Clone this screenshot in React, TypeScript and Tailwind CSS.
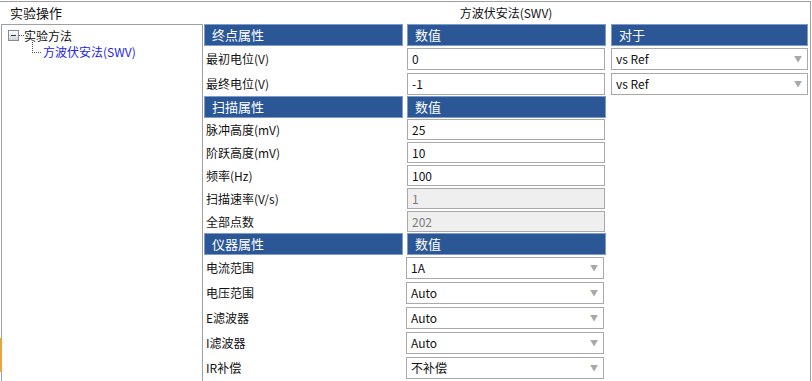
import React from 'react';

const font = { fontFamily: '"Noto Sans CJK SC", "Noto Sans", sans-serif' };

const Header = ({ left, right }: { left: string; right: string }) => (
  <div className="flex h-[22px]">
    <div className="w-[199px] bg-[#2b5797] border border-[#7f9bc9] text-white text-[13px] leading-[20px] pl-[7px]">{left}</div>
    <div className="w-[199px] ml-[4px] bg-[#2b5797] border border-[#7f9bc9] text-white text-[13px] leading-[20px] pl-[7px]">{right}</div>
  </div>
);

const Arrow = () => (
  <span className="text-[#a8a8a8] text-[8px] leading-none mr-[5px]">▼</span>
);

const InputRow = ({ label, value, disabled = false, tall = true }: { label: string; value: string; disabled?: boolean; tall?: boolean }) => (
  <div className={`flex items-start ${tall ? 'h-[25px] pt-[2px]' : 'h-[23px] pt-[1px]'}`}>
    <div className={`w-[203px] pl-[2px] text-[12px] text-[#111] ${tall ? 'leading-[22px]' : 'leading-[21px]'}`}>{label}</div>
    <div
      className={`w-[198px] border border-[#a9a9a9] pl-[4px] text-[12px] ${tall ? 'h-[22px] leading-[20px]' : 'h-[21px] leading-[19px]'} ${disabled ? 'bg-[#efefef] text-[#7a7a7a]' : 'bg-white text-[#111]'}`}
    >
      {value}
    </div>
  </div>
);

const SelectRow = ({ label, value }: { label: string; value: string }) => (
  <div className="flex items-start h-[25px] pt-[2px]">
    <div className="w-[202px] pl-[2px] text-[12px] text-[#111] leading-[22px]">{label}</div>
    <div className="w-[198px] h-[22px] border border-[#a9a9a9] bg-white pl-[4px] text-[12px] text-[#111] leading-[20px] flex items-center justify-between">
      <span>{value}</span>
      <Arrow />
    </div>
  </div>
);

const RefSelect = () => (
  <div className="h-[25px] pt-[2px]">
    <div className="w-[197px] h-[22px] border border-[#a9a9a9] bg-white pl-[4px] text-[12px] text-[#111] leading-[20px] flex items-center justify-between">
      <span>vs Ref</span>
      <Arrow />
    </div>
  </div>
);

export default function App() {
  return (
    <div className="relative w-[812px] h-[381px] bg-white overflow-hidden" style={font}>
      <div className="absolute left-0 top-[338px] w-[2px] h-[34px] bg-[#e9a53c]" />
      <div className="mt-[1px] w-[811px] h-[380px] border-t border-r border-[#a0a0a0] flex flex-col">
        {/* title row */}
        <div className="flex h-[22px] items-center">
          <div className="w-[202px] pl-[10px] text-[13px] text-[#111]">实验操作</div>
          <div className="flex-1 text-center text-[12px] text-[#111]">方波伏安法(SWV)</div>
        </div>
        <div className="flex flex-1">
          {/* tree */}
          <div className="ml-[1px] w-[202px] border-l border-t border-r border-[#a0a0a0] pt-[4px] text-[12px]">
            <div className="flex items-center h-[13px] pl-[6px]">
              <div className="w-[11px] h-[11px] border border-[#8c8c8c] bg-gradient-to-b from-white to-[#cdd5df] flex items-center justify-center">
                <div className="w-[5px] h-[1px] bg-[#333]" />
              </div>
              <div className="w-[5px] border-t border-dotted border-[#555]" />
              <span className="text-[#111] leading-none">实验方法</span>
            </div>
            <div className="flex h-[18px] pl-[30px]">
              <div className="w-[9px] h-[11px] border-l border-b border-dotted border-[#555]" />
              <span className="ml-[2px] mt-[4px] text-[#2323ee] leading-none">方波伏安法(SWV)</span>
            </div>
          </div>
          {/* properties */}
          <div className="flex-1 pl-[1px] flex">
            <div className="w-[402px]">
              <Header left="终点属性" right="数值" />
              <InputRow label="最初电位(V)" value="0" />
              <InputRow label="最终电位(V)" value="-1" />
              <Header left="扫描属性" right="数值" />
              <InputRow label="脉冲高度(mV)" value="25" tall={false} />
              <InputRow label="阶跃高度(mV)" value="10" tall={false} />
              <InputRow label="频率(Hz)" value="100" tall={false} />
              <InputRow label="扫描速率(V/s)" value="1" disabled tall={false} />
              <InputRow label="全部点数" value="202" disabled tall={false} />
              <Header left="仪器属性" right="数值" />
              <SelectRow label="电流范围" value="1A" />
              <SelectRow label="电压范围" value="Auto" />
              <SelectRow label="E滤波器" value="Auto" />
              <SelectRow label="I滤波器" value="Auto" />
              <SelectRow label="IR补偿" value="不补偿" />
            </div>
            <div className="ml-[5px] w-[197px]">
              <div className="h-[22px] bg-[#2b5797] border border-[#7f9bc9] text-white text-[13px] leading-[20px] pl-[7px]">对于</div>
              <RefSelect />
              <RefSelect />
            </div>
          </div>
        </div>
      </div>
    </div>
  );
}
